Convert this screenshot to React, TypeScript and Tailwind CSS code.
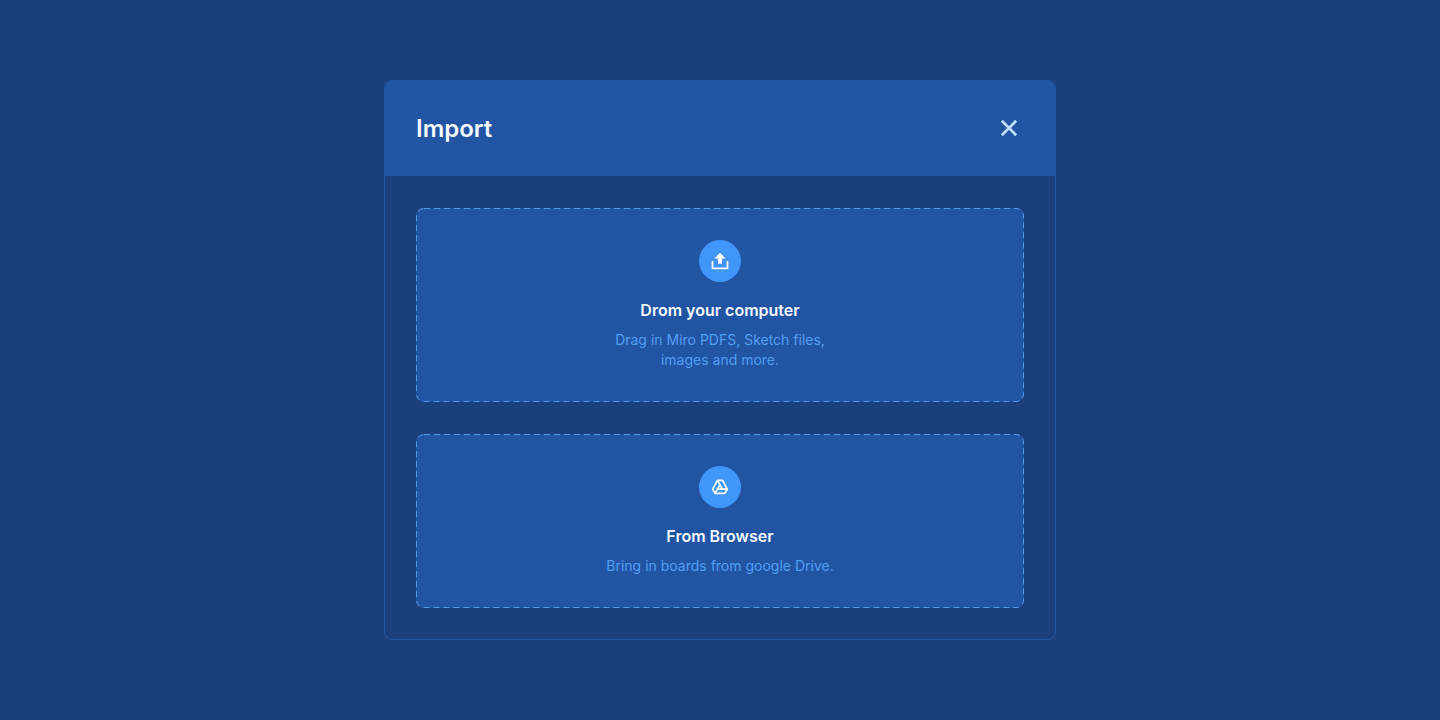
import type { ReactNode } from "react";

function DashedOutline() {
  return (
    <svg className="pointer-events-none absolute inset-0 h-full w-full overflow-visible text-[#529bea]" aria-hidden="true">
      <rect
        x="0.5"
        y="0.5"
        rx="7.5"
        fill="none"
        stroke="currentColor"
        strokeDasharray="6 4"
        className="h-[calc(100%-1px)] w-[calc(100%-1px)]"
      />
    </svg>
  );
}

function UploadIcon() {
  return (
    <svg viewBox="0 0 20 20" className="size-5" fill="none" aria-hidden="true">
      <path d="M10 1.700 15.500 7.500H12V12.700H8V7.500H4.500z" fill="currentColor" />
      <path d="M2.500 9.900v7.500h15V9.900" stroke="currentColor" strokeWidth="1.700" strokeLinejoin="round" />
    </svg>
  );
}

function DriveIcon() {
  return (
    <svg viewBox="0 0 20 20" className="size-5" fill="none" stroke="currentColor" strokeWidth="1.700" strokeLinejoin="round" aria-hidden="true">
      <path d="M7.400 3.400h5.200L17.300 12.200 14.900 16.300H5.100L2.700 12.200z" />
      <path d="M7.400 3.400 12.400 12.200H17.300M5.100 16.300 9.900 7.900M12.400 12.200H7.500" />
    </svg>
  );
}

type SourceProps = { icon: ReactNode; title: string; text: string };

function ImportSource({ icon, title, text }: SourceProps) {
  return (
    <button type="button" className="relative flex w-full cursor-pointer flex-col items-center rounded-lg bg-[#2254a4] p-8 text-center">
      <DashedOutline />
      <span className="flex size-[42px] items-center justify-center rounded-full bg-[#4096fb] text-white">{icon}</span>
      <span className="mt-4 text-base leading-6 font-semibold text-[#f3f9ff]">{title}</span>
      <span className="mt-2 max-w-60 text-sm leading-5 text-[#539ff0]">{text}</span>
    </button>
  );
}

export default function App() {
  return (
    <main className="flex min-h-screen items-center justify-center bg-[#1a407c] p-8 font-['Inter',sans-serif]">
      <section role="dialog" aria-labelledby="import-title" className="w-full max-w-2xl overflow-hidden rounded-lg border border-[#2254a4]">
        <header className="flex items-center justify-between bg-[#2254a4] px-[31px] pt-8 pb-[31px]">
          <h1 id="import-title" className="text-2xl leading-8 font-semibold text-[#f3f9ff]">Import</h1>
          <button type="button" aria-label="Close" className="cursor-pointer text-[#bfdffe]">
            <svg viewBox="0 0 32 32" className="size-8" fill="none" stroke="currentColor" strokeWidth="2.7" aria-hidden="true">
              <path d="M9.800 7.800 24.200 22.200M24.200 7.800 9.800 22.200" />
            </svg>
          </button>
        </header>
        <div className="flex flex-col gap-8 px-[31px] pt-8 pb-[31px]">
          <ImportSource icon={<UploadIcon />} title="Drom your computer" text="Drag in Miro PDFS, Sketch files, images and more." />
          <ImportSource icon={<DriveIcon />} title="From Browser" text="Bring in boards from google Drive." />
        </div>
      </section>
    </main>
  );
}
